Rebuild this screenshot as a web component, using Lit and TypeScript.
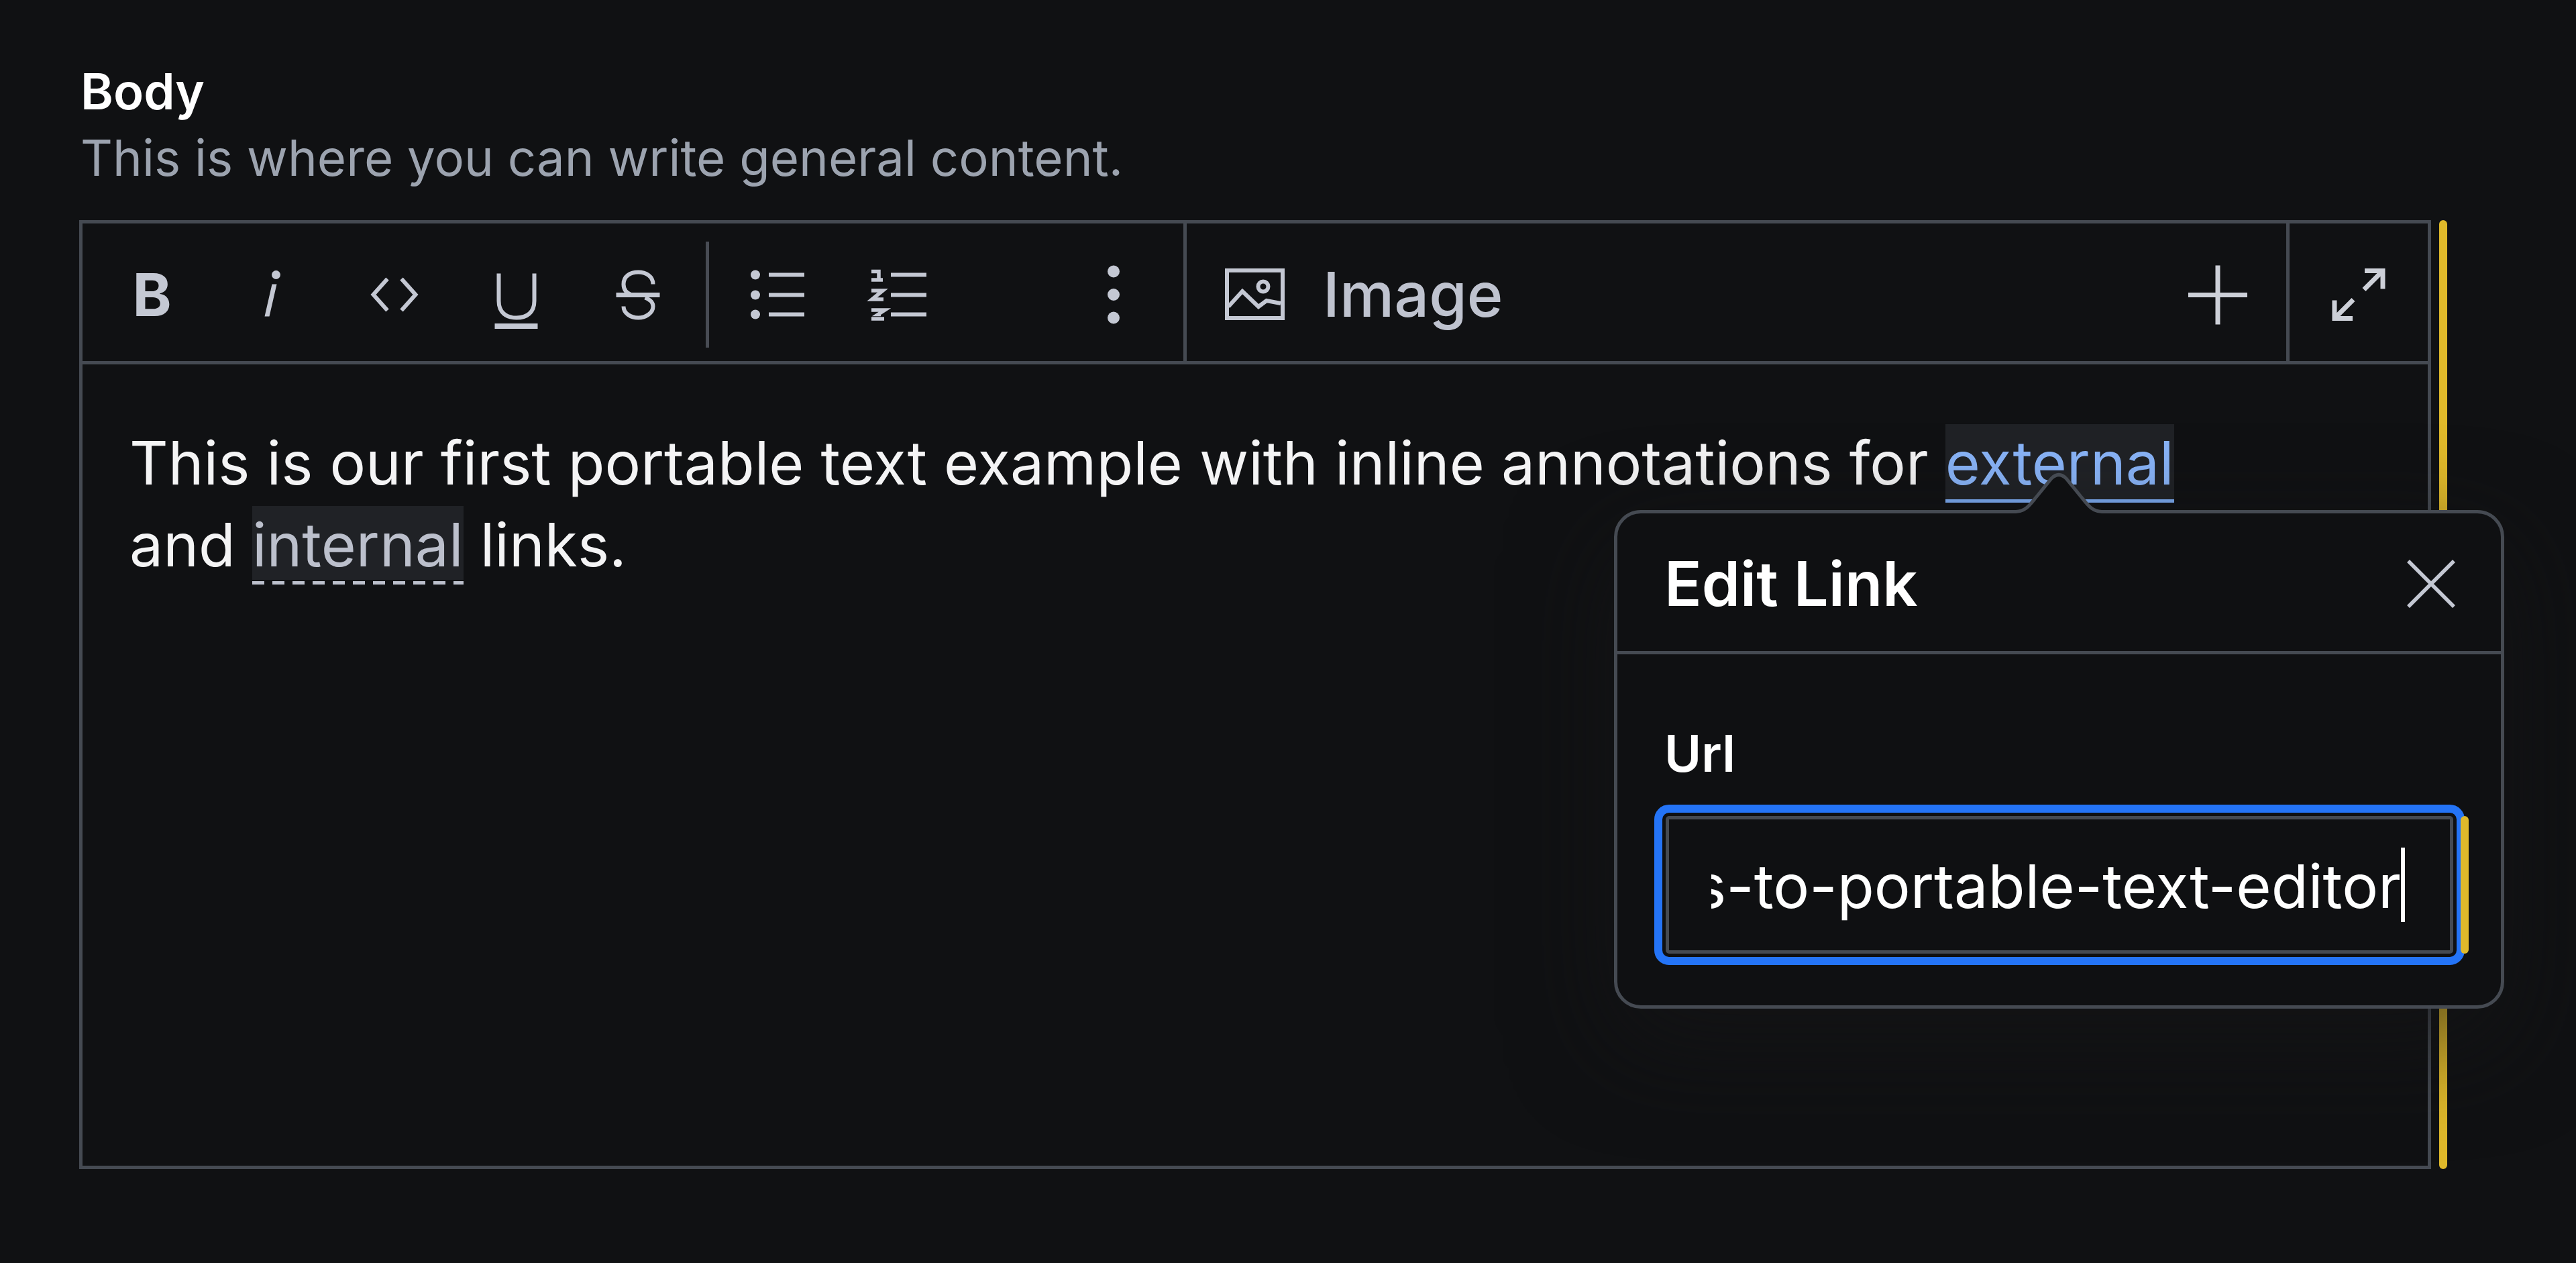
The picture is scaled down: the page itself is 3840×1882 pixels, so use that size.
import { LitElement, html, svg, css } from "lit";
import { customElement } from "lit/decorators.js";

const ico = (cx: number, body: unknown) => html`<svg class="ico" width="100" height="100" viewBox="${cx - 50} 385.5 100 100">${body}</svg>`;

@customElement("app-root")
export class AppRoot extends LitElement {
  static styles = css`
    :host {
      display: block;
      position: relative;
      width: 3840px;
      min-height: 1882px;
      background: #101113;
      font-family: Inter, "Liberation Sans", sans-serif;
      color: #fff;
      overflow: hidden;
    }
    .field { padding: 87px 0 0 118px; width: 3530px; }
    .label { padding-left: 2px; font-size: 74.3px; font-weight: 600; line-height: 98px; color: #fff; }
    .desc { padding-left: 2px; font-size: 74.3px; font-weight: 400; line-height: 100px; color: #9ca3af; margin-bottom: 43px; }
    .row { display: flex; gap: 12px; }
    .bar { width: 12px; border-radius: 6px; background: #e0b92a; flex: none; }
    .editor { flex: none; width: 3506px; height: 1414px; box-sizing: border-box; border: 5px solid #454a52; display: flex; flex-direction: column; }
    .toolbar { display: flex; height: 210px; box-sizing: border-box; border-bottom: 5px solid #454a52; flex: none; }
    .tools { width: 1646px; box-sizing: border-box; border-right: 5px solid #454a52; display: flex; align-items: center; padding: 0 14px 0 13px; flex: none; }
    .btn { width: 181px; height: 100px; display: flex; align-items: center; justify-content: center; flex: none; }
    .tsep { width: 5px; height: 158px; margin: 6px 12px 0 11px; background: #484c54; flex: none; }
    .spacer { flex: 1; }
    .ico { display: block; overflow: visible; }
    .ico .s, .img .s { fill: none; stroke: #c4c8d3; stroke-width: 6; }
    .ico .f, .img .f { fill: #c4c8d3; }
    .b { font-size: 88px; font-weight: 700; color: #c4c8d3; line-height: 100px; padding-top: 6px; }
    .insert { flex: none; width: 1639px; box-sizing: border-box; display: flex; align-items: center; padding-left: 57px; }
    .img { display: block; margin-top: 6px; flex: none; }
    .imgtext { font-size: 91.5px; font-weight: 500; color: #bfc3cf; margin-left: 57px; flex: 1; line-height: 100px; padding-top: 6px; }
    .plus { width: 204px; display: flex; justify-content: center; flex: none; }
    .expand { flex: 1; border-left: 5px solid #454a52; display: flex; align-items: center; justify-content: center; }
    .content { padding: 86px 70px 0; font-size: 89.4px; line-height: 122px; color: #f4f4f5; font-weight: 400; }
    .ext { color: #89b4f8; background: #202226; padding: 3px 0 0; border-bottom: 5px solid #7eaef5; }
    .int {
      color: #bcc0cc;
      padding: 3px 0 5px;
      background:
        repeating-linear-gradient(90deg, #bcc0cc 0 18px, transparent 18px 30px) left bottom / 100% 5px no-repeat,
        linear-gradient(#202226, #202226) left top / 100% calc(100% - 7px) no-repeat;
    }
    .pop { position: absolute; left: 2406px; top: 760px; width: 1327px; height: 743px; box-sizing: border-box; border: 5px solid #454a52; border-radius: 40px; background: #0f1012; box-shadow: 0 50px 150px rgba(20, 20, 22, 0.68); }
    .tip { position: absolute; left: 0; top: 0; overflow: visible; }
    .head { height: 210px; box-sizing: border-box; border-bottom: 5px solid #454a52; display: flex; align-items: center; justify-content: space-between; padding: 5px 68px 0 70px; }
    .title { font-size: 92px; font-weight: 600; color: #fff; line-height: 100px; }
    .body { padding: 98px 72px 0 70px; }
    .url { font-size: 75px; font-weight: 600; line-height: 100px; color: #fff; margin-bottom: 43px; }
    .input { position: relative; margin-left: 2px; width: 1174px; height: 205px; box-sizing: border-box; border: 5px solid #454a52; border-radius: 5px; outline: 12px solid #2474f7; outline-offset: 5px; display: flex; align-items: center; padding: 4px 67px 0 63px; background: #0f1012; }
    .clip { flex: 1; overflow: hidden; display: flex; justify-content: flex-end; align-items: center; height: 120px; }
    .val { font-size: 90px; font-weight: 400; color: #fff; white-space: nowrap; flex: none; line-height: 120px; }
    .cursor { width: 6px; height: 111px; background: #fff; flex: none; margin-top: -4px; }
    .ibar { position: absolute; left: calc(100% + 16px); top: -5px; bottom: -5px; width: 12px; border-radius: 6px; background: #e0b92a; }
  `;

  render() {
    return html`
      <div class="field">
        <div class="label">Body</div>
        <div class="desc">This is where you can write general content.</div>
        <div class="row">
          <div class="editor">
            <div class="toolbar">
              <div class="tools">
                <div class="btn"><span class="b">B</span></div>
                <div class="btn">${ico(407.5, svg`<path class="f" d="M394 471 L405 423 L412 423 L401 471 Z"/><circle class="f" cx="411" cy="409" r="6.5"/>`)}</div>
                <div class="btn">${ico(588.5, svg`<path class="s" d="M577 415 L556 438.5 L577 462 M598 415 L619 438.5 L598 462"/>`)}</div>
                <div class="btn">${ico(769.5, svg`<path class="s" d="M743 407 V448 C743 465 754 473 769.5 473 C785 473 796 465 796 448 V407"/><path class="s" d="M737 485.5 H801" style="stroke-width:8"/>`)}</div>
                <div class="btn">${ico(950.5, svg`<path class="s" d="M973 423 C973 411 962 405 951 405 C939 405 929 411 929 423 C929 431 933 436 941 439 M961 443 C969 446 973 450 973 456 C973 466 962 473 951 473 C939 473 929 466 929 456"/><path class="s" d="M918 439 H983" style="stroke-width:7"/>`)}</div>
                <div class="tsep"></div>
                <div class="btn">${ico(1160, svg`<circle class="f" cx="1126" cy="409" r="7"/><circle class="f" cx="1126" cy="439" r="7"/><circle class="f" cx="1126" cy="468" r="7"/><path class="s" style="stroke-width:6" d="M1146 409 H1199 M1146 439 H1199 M1146 468 H1199"/>`)}</div>
                <div class="btn">${ico(1340, svg`<path class="s" d="M1298 404 H1309 V416 M1298 416.5 H1315 M1298 432.5 H1315 L1299 445.5 H1316 M1298 461.5 H1318 L1308 468 H1312 M1298 474.5 H1317" style="stroke-width:5.5"/><path class="s" d="M1327 409 H1380 M1327 439 H1380 M1327 468 H1380" style="stroke-width:6"/>`)}</div>
                <div class="spacer"></div>
                <div class="btn">${ico(1660, svg`<circle class="f" cx="1660" cy="404" r="9"/><circle class="f" cx="1660" cy="438.5" r="9"/><circle class="f" cx="1660" cy="473" r="9"/>`)}</div>
              </div>
              <div class="insert">
                <svg class="img" width="89" height="77" viewBox="1826 400 89 77"><path class="s" style="stroke-width:6" d="M1829 403 H1912 V474 H1829 Z"/><circle class="s" cx="1883" cy="427" r="7.5"/><path class="s" style="stroke-width:6" d="M1831 457 L1852 434 L1876 457 L1888 448 L1909 452"/></svg>
                <div class="imgtext">Image</div>
                <div class="plus">${ico(3306, svg`<path class="s" style="stroke:#cdd0d8;stroke-width:7" d="M3262 439 H3350 M3306 395 V483"/>`)}</div>
              </div>
              <div class="expand">${ico(3516, svg`<path class="s" style="stroke:#cdd0d8;stroke-width:7" d="M3525 403 H3552 V430 M3552 403 L3524 431 M3480 447 V474 H3507 M3480 474 L3508 446"/>`)}</div>
            </div>
            <div class="content">This is our first portable text example with inline annotations for <span class="ext">external</span><br>and <span class="int">internal</span> links.</div>
          </div>
          <div class="bar"></div>
        </div>
      </div>
      <div class="pop">
        <svg class="tip" width="10" height="10">
          <g transform="translate(-2411 -765)">
            <path fill="#0f1012" d="M2998 762 H3005 C3020 762 3026 752 3036 740 L3058 713 Q3069 702 3080 713 L3102 740 C3112 752 3118 762 3133 762 H3140 V768 H2998 Z"/>
            <path fill="none" stroke="#454a52" stroke-width="5" d="M2998 762.5 H3005 C3020 762 3026 752 3036 740 L3058 713 Q3069 702 3080 713 L3102 740 C3112 752 3118 762 3133 762.5 H3140"/>
          </g>
        </svg>
        <div class="head">
          <div class="title">Edit Link</div>
          <svg width="72" height="72" viewBox="3589 836 72 72"><path fill="none" stroke="#c4c8d3" stroke-width="5.5" d="M3591 838 L3659 906 M3659 838 L3591 906"/></svg>
        </div>
        <div class="body">
          <div class="url">Url</div>
          <div class="input">
            <div class="clip"><span class="val">links-to-portable-text-editor</span><span class="cursor"></span></div>
            <div class="ibar"></div>
          </div>
        </div>
      </div>
    `;
  }
}
